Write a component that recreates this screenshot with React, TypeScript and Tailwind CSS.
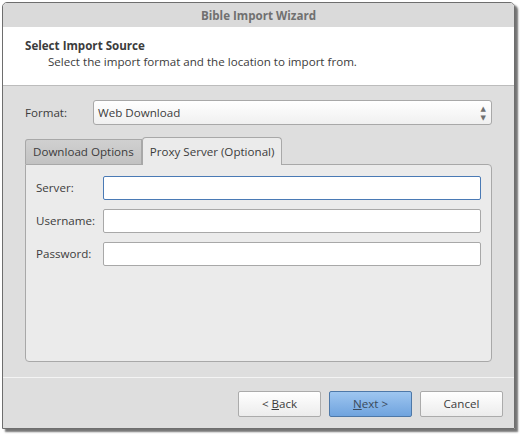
import React from "react";

const font = { fontFamily: '"Open Sans", "DejaVu Sans", sans-serif' };

function Field({ label, focused }: { label: string; focused?: boolean }) {
  return (
    <div className="flex h-[24px] items-center">
      <div className="w-[67px] text-[11.6px] text-[#3c3c3c]">{label}</div>
      <div
        className={
          focused
            ? "h-[24px] flex-1 rounded-[2px] border border-[#4a7ab5] bg-white"
            : "h-[24px] flex-1 rounded-[2px] border border-[#a8a8a8] bg-white"
        }
      />
    </div>
  );
}

function Button({
  children,
  primary,
}: {
  children: React.ReactNode;
  primary?: boolean;
}) {
  return (
    <div
      className={
        primary
          ? "flex h-[26px] w-[83px] items-center justify-center rounded-[2px] border border-[#4d78a8] bg-gradient-to-b from-[#9ec6f0] to-[#6fa3de] text-[11.6px] text-[#3a4a5c]"
          : "flex h-[26px] w-[83px] items-center justify-center rounded-[2px] border border-[#ababab] bg-gradient-to-b from-white to-[#ececec] text-[11.6px] text-[#3c3c3c]"
      }
    >
      <span>{children}</span>
    </div>
  );
}

export default function App() {
  return (
    <div className="h-[437px] w-[524px] bg-white" style={font}>
      <div className="ml-[2px] mt-[2px] flex h-[427px] w-[513px] flex-col overflow-hidden rounded-t-[5px] border border-[#6e6e6e] shadow-[3px_3px_2px_rgba(0,0,0,0.55)]">
        {/* title bar */}
        <div className="flex h-[24px] shrink-0 items-center justify-center bg-[#dadada] pt-[1px] text-[11.6px] font-bold text-[#707070]">
          Bible Import Wizard
        </div>
        {/* header */}
        <div className="h-[59px] shrink-0 border-b border-[#bcbcbc] bg-white pl-[22px] pt-[11px] text-[11.6px] leading-[16px] text-[#3c3c3c]">
          <div className="font-bold">Select Import Source</div>
          <div className="pl-[23px]">
            Select the import format and the location to import from.
          </div>
        </div>
        {/* body */}
        <div className="flex flex-1 flex-col bg-[#dedede]">
          <div className="flex flex-1 flex-col px-[22px] pt-[14px]">
            <div className="flex h-[25px] items-center">
              <div className="w-[68px] text-[11.6px] text-[#3c3c3c]">Format:</div>
              <div className="relative flex h-[25px] flex-1 items-center rounded-[3px] border border-[#a8a8a8] bg-gradient-to-b from-white to-[#f0f0f0] pl-[4px] text-[11.6px] text-[#3c3c3c]">
                Web Download
                <div className="absolute right-[5px] top-[3px] flex flex-col items-center text-[7px] leading-[9px] text-[#707070]">
                  <span>▲</span>
                  <span>▼</span>
                </div>
              </div>
            </div>
            {/* tabs */}
            <div className="mt-[12px] flex items-end">
              <div className="flex h-[25px] items-center rounded-tl-[3px] border border-b-0 border-[#a8a8a8] bg-gradient-to-b from-[#d0d0d0] to-[#c2c2c2] px-[7px] text-[11.6px] text-[#3c3c3c]">
                Download Options
              </div>
              <div className="relative z-10 -mb-px flex h-[28px] items-center rounded-t-[4px] border border-b-0 border-[#a8a8a8] bg-[#ebebeb] px-[7px] text-[11.6px] text-[#3c3c3c]">
                Proxy Server (Optional)
              </div>
            </div>
            <div className="flex h-[198px] flex-col gap-[9px] rounded-b-[4px] rounded-tr-[4px] border border-[#a8a8a8] bg-[#ebebeb] pl-[10px] pr-[10px] pt-[11px]">
              <Field label="Server:" focused />
              <Field label="Username:" />
              <Field label="Password:" />
            </div>
          </div>
          {/* footer */}
          <div className="mt-[15px] flex h-[51px] shrink-0 items-start justify-end gap-[8px] border-t border-[#f4f4f4] pr-[11px] pt-[13px]">
            <Button>
              &lt; <span className="underline">B</span>ack
            </Button>
            <Button primary>
              <span className="underline">N</span>ext &gt;
            </Button>
            <Button>Cancel</Button>
          </div>
        </div>
      </div>
    </div>
  );
}
